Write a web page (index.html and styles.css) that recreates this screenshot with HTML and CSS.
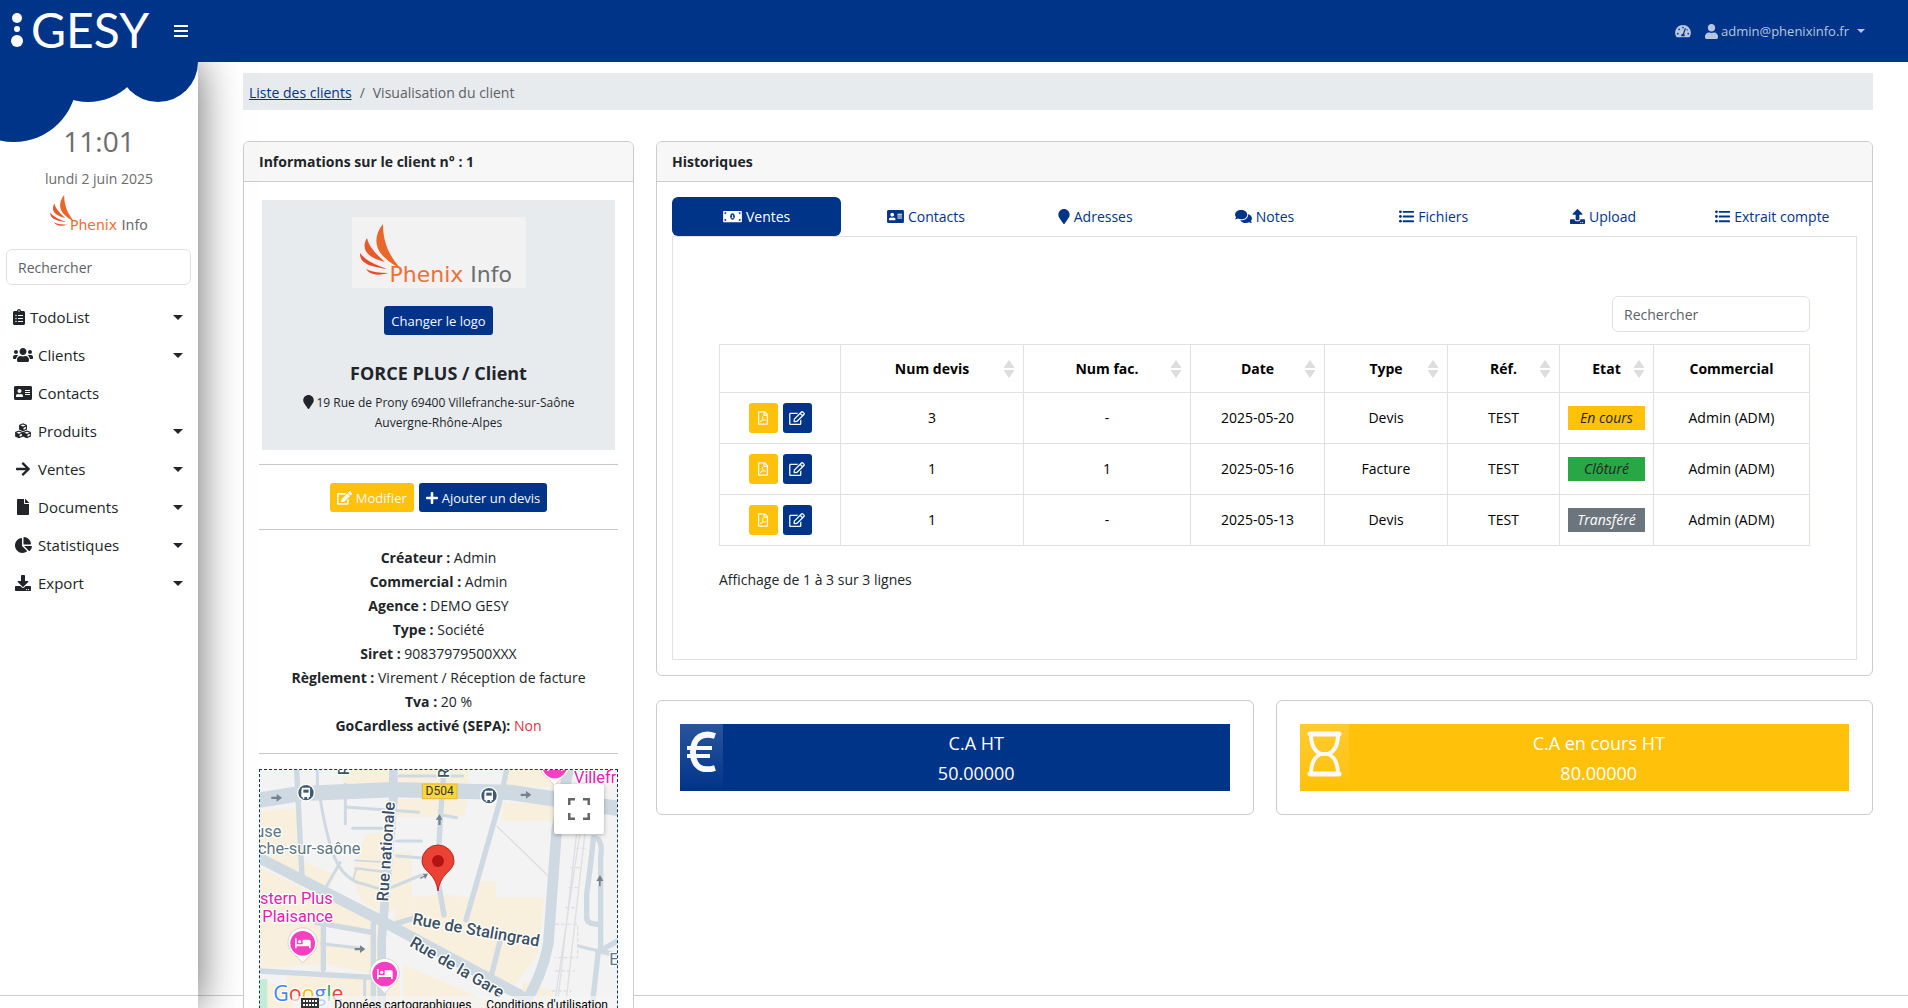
FILE: index.html
```html
<!DOCTYPE html>
<html lang="fr">
<head>
<meta charset="utf-8">
<meta name="viewport" content="width=device-width, initial-scale=1">
<title>GESY - Visualisation du client</title>
<link rel="stylesheet" href="styles.css">
</head>
<body>
<svg class="sprite" aria-hidden="true">
  <symbol id="i-user" viewBox="0 0 448 512"><path d="M224 256c70.7 0 128-57.3 128-128S294.7 0 224 0 96 57.3 96 128s57.3 128 128 128zm89.6 32h-16.7c-22.2 10.2-46.9 16-72.9 16s-50.6-5.8-72.9-16h-16.7C60.2 288 0 348.2 0 422.4V464c0 26.5 21.5 48 48 48h352c26.5 0 48-21.5 48-48v-41.6c0-74.2-60.2-134.4-134.4-134.4z"/></symbol>
  <symbol id="i-gauge" viewBox="0 0 576 512"><path fill-rule="evenodd" d="M288 32C129 32 0 161 0 320c0 53 14 102 39 145 6 9 16 15 27 15h444c11 0 21-6 27-15 25-43 39-92 39-145C576 161 447 32 288 32zm0 64c18 0 32 14 32 32s-14 32-32 32-32-14-32-32 14-32 32-32zM96 384a32 32 0 1 1 0-64 32 32 0 0 1 0 64zm48-160a32 32 0 1 1 0-64 32 32 0 0 1 0 64zm247-43l-62 184c13 12 23 29 23 51 0 12-3 23-9 32H233c-5-9-9-20-9-32 0-35 28-64 63-64l61-183c4-13 17-20 30-15 13 4 17 15 13 27zm25 27c8-23 40-21 46 0 4 17-8 32-24 34-14 0-26-10-25-24zm64 176a32 32 0 1 1 0-64 32 32 0 0 1 0 64z"/></symbol>
  <symbol id="i-tasks" viewBox="0 0 384 512"><path d="M336 64h-80c0-35.3-28.7-64-64-64s-64 28.7-64 64H48C21.5 64 0 85.5 0 112v352c0 26.5 21.5 48 48 48h288c26.5 0 48-21.5 48-48V112c0-26.5-21.5-48-48-48zM96 424c-13.3 0-24-10.7-24-24s10.7-24 24-24 24 10.7 24 24-10.7 24-24 24zm0-96c-13.3 0-24-10.7-24-24s10.7-24 24-24 24 10.7 24 24-10.7 24-24 24zm0-96c-13.3 0-24-10.7-24-24s10.7-24 24-24 24 10.7 24 24-10.7 24-24 24zm96-192c13.3 0 24 10.7 24 24s-10.7 24-24 24-24-10.7-24-24 10.7-24 24-24zm128 368c0 4.4-3.6 8-8 8H168c-4.4 0-8-3.6-8-8v-16c0-4.4 3.6-8 8-8h144c4.4 0 8 3.6 8 8v16zm0-96c0 4.4-3.6 8-8 8H168c-4.4 0-8-3.6-8-8v-16c0-4.4 3.6-8 8-8h144c4.4 0 8 3.6 8 8v16zm0-96c0 4.4-3.6 8-8 8H168c-4.4 0-8-3.6-8-8v-16c0-4.4 3.6-8 8-8h144c4.4 0 8 3.6 8 8v16z"/></symbol>
  <symbol id="i-users" viewBox="0 0 640 512"><path d="M96 224c35.3 0 64-28.7 64-64s-28.7-64-64-64-64 28.7-64 64 28.7 64 64 64zm448 0c35.3 0 64-28.7 64-64s-28.7-64-64-64-64 28.7-64 64 28.7 64 64 64zm32 32h-64c-17.6 0-33.5 7.1-45.1 18.6 40.3 22.1 68.9 62 75.1 109.4h66c17.7 0 32-14.3 32-32v-32c0-35.3-28.7-64-64-64zm-256 0c61.9 0 112-50.1 112-112S381.9 32 320 32 208 82.1 208 144s50.1 112 112 112zm76.8 32h-8.3c-20.8 10-43.9 16-68.5 16s-47.6-6-68.5-16h-8.3C179.6 288 128 339.6 128 403.2V432c0 26.5 21.5 48 48 48h288c26.5 0 48-21.5 48-48v-28.8c0-63.6-51.6-115.2-115.2-115.2zm-223.7-13.4C161.5 263.1 145.6 256 128 256H64c-35.3 0-64 28.7-64 64v32c0 17.7 14.3 32 32 32h65.9c6.3-47.4 34.9-87.3 75.2-109.4z"/></symbol>
  <symbol id="i-card" viewBox="0 0 576 512"><path d="M528 32H48C21.500 32 0 53.500 0 80v352c0 26.500 21.500 48 48 48h480c26.500 0 48-21.500 48-48V80c0-26.500-21.500-48-48-48zm-352 96c35.300 0 64 28.700 64 64s-28.700 64-64 64-64-28.700-64-64 28.700-64 64-64zm112 236.800c0 10.600-10 19.200-22.400 19.200H86.400C74 384 64 375.400 64 364.800v-19.200c0-31.800 30.100-57.600 67.200-57.600h5c12.300 5.100 25.700 8 39.800 8s27.600-2.900 39.800-8h5c37.100 0 67.200 25.800 67.200 57.600v19.200zM512 312c0 4.400-3.600 8-8 8H360c-4.400 0-8-3.600-8-8v-16c0-4.400 3.600-8 8-8h144c4.400 0 8 3.600 8 8v16zm0-64c0 4.400-3.600 8-8 8H360c-4.400 0-8-3.600-8-8v-16c0-4.400 3.600-8 8-8h144c4.400 0 8 3.600 8 8v16zm0-64c0 4.400-3.600 8-8 8H360c-4.400 0-8-3.600-8-8v-16c0-4.400 3.600-8 8-8h144c4.400 0 8 3.600 8 8v16z"/></symbol>
  <symbol id="i-cubes" viewBox="0 0 512 512">
    <g id="cube"><path d="M256 10l112 42q14 6 14 22v120q0 14-13 21l-113 48-113-48q-13-7-13-21V74q0-16 14-22z"/><path d="M256 48l84 32-84 33-84-33zM274 148l72-29v62l-72 32z" fill="#fff"/></g>
    <use href="#cube" x="-126" y="228"/><use href="#cube" x="126" y="228"/>
  </symbol>
  <symbol id="i-arrow" viewBox="0 0 448 512"><path d="M190.500 66.900l22.200-22.200c9.400-9.400 24.600-9.400 33.900 0L441 239c9.400 9.400 9.400 24.600 0 33.900L246.600 467.300c-9.400 9.400-24.600 9.400-33.900 0l-22.200-22.200c-9.500-9.500-9.300-25 .4-34.300L311.400 296H24c-13.300 0-24-10.700-24-24v-32c0-13.300 10.700-24 24-24h287.400L190.900 101.200c-9.800-9.300-10-24.800-.4-34.300z"/></symbol>
  <symbol id="i-file" viewBox="0 0 384 512"><path d="M224 136V0H24C10.700 0 0 10.700 0 24v464c0 13.300 10.700 24 24 24h336c13.300 0 24-10.700 24-24V160H248c-13.200 0-24-10.800-24-24zm160-14.100v6.100H256V0h6.100c6.400 0 12.500 2.500 17 7l97.900 98c4.500 4.500 7 10.600 7 16.900z"/></symbol>
  <symbol id="i-pie" viewBox="0 0 544 512"><path d="M527.790 288H290.500l158.030 158.030c6.040 6.040 15.980 6.530 22.190.68 38.700-36.460 65.320-85.610 73.130-140.860 1.340-9.460-6.510-17.850-16.060-17.850zm-15.830-64.800C503.720 103.740 408.260 8.280 288.800.04 279.680-.59 272 7.100 272 16.240V240h223.770c9.140 0 16.820-7.680 16.190-16.800zM224 288V50.710c0-9.550-8.390-17.400-17.840-16.060C86.990 51.490-4.100 155.600.14 280.370 4.500 408.510 114.830 513.590 243.030 511.980c50.400-.63 96.970-16.870 135.260-44.030 7.900-5.600 8.420-17.230 1.570-24.080L224 288z"/></symbol>
  <symbol id="i-download" viewBox="0 0 512 512"><path d="M216 0h80c13.300 0 24 10.700 24 24v168h87.700c17.800 0 26.700 21.500 14.100 34.100L269.700 378.300c-7.500 7.500-19.800 7.500-27.300 0L90.100 226.100c-12.600-12.600-3.700-34.100 14.100-34.100H192V24c0-13.300 10.700-24 24-24zm296 376v112c0 13.300-10.700 24-24 24H24c-13.300 0-24-10.700-24-24V376c0-13.300 10.700-24 24-24h146.700l49 49c20.100 20.100 52.500 20.100 72.600 0l49-49H488c13.300 0 24 10.700 24 24zm-124 88c0-11-9-20-20-20s-20 9-20 20 9 20 20 20 20-9 20-20zm64 0c0-11-9-20-20-20s-20 9-20 20 9 20 20 20 20-9 20-20z"/></symbol>
  <symbol id="i-upload" viewBox="0 0 512 512"><path d="M296 384h-80c-13.300 0-24-10.700-24-24V192h-87.700c-17.800 0-26.700-21.500-14.100-34.100L242.300 5.700c7.500-7.500 19.800-7.500 27.300 0l152.200 152.200c12.600 12.600 3.700 34.100-14.100 34.100H320v168c0 13.300-10.700 24-24 24zm216-8v112c0 13.300-10.700 24-24 24H24c-13.300 0-24-10.700-24-24V376c0-13.300 10.700-24 24-24h136v8c0 30.900 25.100 56 56 56h80c30.900 0 56-25.100 56-56v-8h136c13.300 0 24 10.700 24 24zm-124 88c0-11-9-20-20-20s-20 9-20 20 9 20 20 20 20-9 20-20zm64 0c0-11-9-20-20-20s-20 9-20 20 9 20 20 20 20-9 20-20z"/></symbol>
  <symbol id="i-marker" viewBox="0 0 384 512"><path d="M172.268 501.670C26.970 291.031 0 269.413 0 192 0 85.961 85.961 0 192 0s192 85.961 192 192c0 77.413-26.970 99.031-172.268 309.670-9.535 13.774-29.930 13.773-39.464 0z"/></symbol>
  <symbol id="i-edit" viewBox="0 0 576 512"><path d="M402.600 83.200l90.200 90.200c3.800 3.800 3.800 10 0 13.800L274.400 405.600l-92.800 10.300c-12.400 1.400-22.900-9.100-21.500-21.500l10.300-92.800L388.800 83.200c3.800-3.800 10-3.800 13.800 0zm162-22.900l-48.800-48.800c-15.200-15.200-39.900-15.200-55.200 0l-35.400 35.400c-3.800 3.800-3.800 10 0 13.800l90.200 90.200c3.800 3.800 10 3.800 13.800 0l35.400-35.400c15.200-15.300 15.200-40 0-55.200zM384 346.200V448H64V128h229.800c3.200 0 6.200-1.300 8.500-3.500l40-40c7.600-7.600 2.200-20.500-8.500-20.500H48C21.500 64 0 85.500 0 112v352c0 26.500 21.500 48 48 48h352c26.500 0 48-21.500 48-48V306.200c0-10.700-12.900-16-20.500-8.500l-40 40c-2.200 2.300-3.500 5.300-3.500 8.500z"/></symbol>
  <symbol id="i-edit-line" viewBox="0 0 576 512"><path d="M402.300 344.900l32-32c5-5 13.700-1.500 13.700 5.700V464c0 26.500-21.500 48-48 48H48c-26.500 0-48-21.500-48-48V112c0-26.500 21.500-48 48-48h273.500c7.100 0 10.700 8.600 5.700 13.700l-32 32c-1.500 1.500-3.500 2.300-5.700 2.300H48v352h352V350.500c0-2.100.8-4.100 2.300-5.600zm156.600-201.800L296.300 405.700l-90.400 10c-26.200 2.900-48.500-19.200-45.600-45.600l10-90.400L432.900 17.100c22.900-22.900 59.900-22.900 82.700 0l43.200 43.200c22.900 22.900 22.900 60 .1 82.800zM460.100 174L402 115.900 216.200 301.800l-7.300 65.300 65.300-7.300L460.100 174zm64.800-79.700l-43.200-43.200c-4.100-4.100-10.800-4.100-14.800 0L436 82l58.100 58.100 30.900-30.900c4-4.200 4-10.800-.1-14.900z"/></symbol>
  <symbol id="i-pdf" viewBox="0 0 384 512"><path d="M369.900 97.900L286 14C277 5 264.800-.1 252.100-.1H48C21.500 0 0 21.500 0 48v416c0 26.500 21.500 48 48 48h288c26.500 0 48-21.500 48-48V131.900c0-12.700-5.100-25-14.100-34zM332.100 128H256V51.900l76.100 76.100zM48 464V48h160v104c0 13.300 10.700 24 24 24h104v288H48zm250.200-143.700c-12.200-12-47-8.700-64.400-6.500-17.200-10.500-28.700-25-36.800-46.300 3.900-16.100 10.100-40.600 5.400-56-4.200-26.200-37.800-23.600-42.600-5.900-4.400 16.100-.4 38.500 7 67.100-10 23.900-24.900 56-35.400 74.400-20 10.300-47 26.200-51 46.200-3.300 15.800 26 55.200 76.100-31.200 22.400-7.400 46.800-16.500 68.400-20.100 18.900 10.200 41 17 55.800 17 25.500 0 28-28.200 17.500-38.700zm-198.100 77.800c5.100-13.700 24.500-29.500 30.400-35-19 30.300-30.400 35.700-30.400 35zm81.600-190.600c7.400 0 6.700 32.100 1.800 40.800-4.400-13.900-4.300-40.800-1.800-40.800zm-24.400 136.600c9.700-16.900 18-37 24.700-54.700 8.300 15.100 18.900 27.200 30.100 35.500-20.800 4.300-38.900 13.100-54.800 19.200zm131.600-5s-5 6-37.300-7.800c35.100-2.600 40.900 5.400 37.300 7.800z"/></symbol>
  <symbol id="i-plus" viewBox="0 0 448 512"><path d="M416 208H272V64c0-17.670-14.330-32-32-32h-32c-17.670 0-32 14.330-32 32v144H32c-17.670 0-32 14.330-32 32v32c0 17.670 14.330 32 32 32h144v144c0 17.670 14.330 32 32 32h32c17.670 0 32-14.330 32-32V304h144c17.670 0 32-14.330 32-32v-32c0-17.670-14.330-32-32-32z"/></symbol>
  <symbol id="i-comments" viewBox="0 0 576 512"><path d="M416 192c0-88.400-93.100-160-208-160S0 103.600 0 192c0 34.300 14.100 65.900 38 92-13.400 30.200-35.500 54.200-35.800 54.500-2.200 2.300-2.800 5.700-1.500 8.700S4.800 352 8 352c36.600 0 66.900-12.300 88.700-25 32.200 15.700 70.300 25 111.300 25 114.900 0 208-71.600 208-160zm122 220c23.900-26 38-57.700 38-92 0-66.900-53.500-124.200-129.300-148.100.9 6.600 1.300 13.300 1.300 20.100 0 105.900-107.700 192-240 192-10.800 0-21.300-.8-31.700-1.900C207.800 439.600 281.800 480 368 480c41 0 79.100-9.200 111.300-25 21.800 12.700 52.100 25 88.700 25 3.200 0 6.100-1.900 7.300-4.800 1.300-2.900.7-6.300-1.500-8.700-.3-.3-22.400-24.200-35.800-54.500z"/></symbol>
  <symbol id="i-list" viewBox="0 0 512 512"><circle cx="48" cy="96" r="48"/><circle cx="48" cy="256" r="48"/><circle cx="48" cy="416" r="48"/><rect x="128" y="64" width="384" height="64" rx="16"/><rect x="128" y="224" width="384" height="64" rx="16"/><rect x="128" y="384" width="384" height="64" rx="16"/></symbol>
  <symbol id="i-money" viewBox="0 0 640 512"><path fill-rule="evenodd" d="M20 64h600a20 20 0 0 1 20 20v344a20 20 0 0 1-20 20H20a20 20 0 0 1-20-20V84a20 20 0 0 1 20-20zm28 48v64a64 64 0 0 0 64-64zm0 224v64h64a64 64 0 0 0-64-64zm272 32c44 0 80-50 80-112s-36-112-80-112-80 50-80 112 36 112 80 112zm272 32v-64a64 64 0 0 0-64 64zm0-224v-64h-64a64 64 0 0 0 64 64z"/><path d="M300 204l28-12h12v96h20v24h-80v-24h22v-62l-12 4z"/></symbol>
  <symbol id="i-phenix" viewBox="0 0 130 66"><g fill="#e9672a"><path d="M24 5c-9 11-9 24 1 33 6 6 12 9 16 11C31 37 24 25 24 5z"/><path fill="#e95a2a" d="M8 19c-5 8-2 15 5 19 5 3 10 4 13 5C17 35 10 28 8 19z"/><path fill="#e84a2a" d="M1 34c0 9 6 13 27 16C17 46 7 42 1 34z"/><path fill="#e84a2a" d="M7 50c4 6 12 7 22 4-8 0-16-1-22-4z"/></g></symbol>
</svg>

<div class="shell">
  <header class="topbar">
    <a class="brand" href="#" aria-label="GESY">
      <svg class="brand-dots" width="14" height="36" viewBox="0 0 14 36" aria-hidden="true"><circle cx="6" cy="6" r="5"/><circle cx="6" cy="17" r="3"/><circle cx="6" cy="29" r="6"/></svg>
      <span class="brand-name">GESY</span>
    </a>
    <button class="burger" type="button" aria-label="Menu"><span></span><span></span><span></span></button>
    <nav class="account">
      <a href="#" aria-label="Tableau de bord"><svg class="icon" width="16" height="14"><use href="#i-gauge"/></svg></a>
      <a href="#"><svg class="icon" width="13" height="15"><use href="#i-user"/></svg>admin@phenixinfo.fr<span class="caret caret-small"></span></a>
    </nav>
  </header>

  <div class="frame">
    <aside class="sidebar">
      <svg class="cloud" width="198" height="80" viewBox="0 62 198 80" aria-hidden="true"><circle cx="14" cy="79" r="63"/><circle cx="88" cy="43" r="59"/><circle cx="158" cy="62" r="40"/></svg>
      <p class="clock">11:01</p>
      <p class="day">lundi 2 juin 2025</p>
      <div class="side-logo phenix phenix-small"><svg width="80" height="40" aria-hidden="true"><use href="#i-phenix"/></svg><span class="phenix-name"><b>Phenix</b> Info</span></div>
      <form class="side-search"><input class="field" type="search" placeholder="Rechercher" aria-label="Rechercher"></form>
      <nav class="menu">
        <a class="tight" href="#"><span class="menu-icon"><svg width="12" height="16"><use href="#i-tasks"/></svg></span>TodoList<span class="caret"></span></a>
        <a href="#"><span class="menu-icon"><svg width="20" height="16"><use href="#i-users"/></svg></span>Clients<span class="caret"></span></a>
        <a href="#"><span class="menu-icon"><svg width="18" height="16"><use href="#i-card"/></svg></span>Contacts</a>
        <a href="#"><span class="menu-icon"><svg width="16" height="16"><use href="#i-cubes"/></svg></span>Produits<span class="caret"></span></a>
        <a href="#"><span class="menu-icon"><svg width="14" height="16"><use href="#i-arrow"/></svg></span>Ventes<span class="caret"></span></a>
        <a href="#"><span class="menu-icon"><svg width="12" height="16"><use href="#i-file"/></svg></span>Documents<span class="caret"></span></a>
        <a href="#"><span class="menu-icon"><svg width="17" height="16"><use href="#i-pie"/></svg></span>Statistiques<span class="caret"></span></a>
        <a href="#"><span class="menu-icon"><svg width="16" height="16"><use href="#i-download"/></svg></span>Export<span class="caret"></span></a>
      </nav>
      <div class="footer side-foot"></div>
    </aside>

    <div class="page">
      <main class="content">
        <nav class="crumbs" aria-label="Fil d'Ariane"><a href="#">Liste des clients</a><span>/</span><span>Visualisation du client</span></nav>

        <div class="columns">
          <section class="card client">
            <h2 class="card-title">Informations sur le client n° : 1</h2>
            <div class="card-body">
              <div class="identity">
                <div class="phenix phenix-large"><svg width="130" height="66" aria-hidden="true"><use href="#i-phenix"/></svg><span class="phenix-name"><b>Phenix</b> Info</span></div>
                <button class="btn btn-blue" type="button">Changer le logo</button>
                <h3>FORCE PLUS / Client</h3>
                <p><svg class="icon" width="11" height="14"><use href="#i-marker"/></svg>19 Rue de Prony 69400 Villefranche-sur-Saône<br>Auvergne-Rhône-Alpes</p>
              </div>
              <div class="actions">
                <button class="btn btn-yellow" type="button"><svg class="icon" width="15" height="14"><use href="#i-edit"/></svg>Modifier</button>
                <button class="btn btn-blue" type="button"><svg class="icon" width="12" height="14"><use href="#i-plus"/></svg>Ajouter un devis</button>
              </div>
              <ul class="facts">
                <li><b>Créateur :</b> Admin</li>
                <li><b>Commercial :</b> Admin</li>
                <li><b>Agence :</b> DEMO GESY</li>
                <li><b>Type :</b> Société</li>
                <li><b>Siret :</b> 90837979500XXX</li>
                <li><b>Règlement :</b> Virement / Réception de facture</li>
                <li><b>Tva :</b> 20 %</li>
                <li><b>GoCardless activé (SEPA):</b> <span class="no">Non</span></li>
              </ul>
              <div class="map">
                <svg class="map-art" viewBox="60 57 1071 900" preserveAspectRatio="xMinYMin slice" role="img" aria-label="Plan du quartier">
                  <rect x="0" y="0" width="1200" height="960" fill="#f3f3f4"/>
                  <g fill="#f8efdd">
                    <path d="M310 57h140v40l-140 20zM475 57h210v45H475zM470 145h210l-8 52H470zM790 57h180v50H790zM790 155h150v55H786zM60 180l110-8 8 205-118-60zM375 250l60-5v60l80-3v140l-80 50-70-40-30-80zM190 330l90 40-20 40-70-35zM60 350l360 170v150L250 640 60 650zM480 440l130-10 90 10 20-50h48v50h145l-20 170-90 120-350-200zM140 675l340 10v270H60V700h80zM490 640l300 130v190H490zM850 690l90 30-50 240h-90z"/>
                  </g>
                  <path d="M0 685h82v270H0z" fill="#c3ecd4"/>
                  <path d="M258 528l100 16 28 14v34l-128-10z" fill="#f3f3f4"/>
                  <g fill="none" stroke="#ced9e2" stroke-linecap="round" stroke-linejoin="round">
                    <path stroke-width="9" d="M232 57v80M240 140q20 120 44 180 30 70 90 80l60 18 110-46M316 100v118M316 168l220 16M338 232h126M470 270h74M470 315l80 6M478 75h190M605 192l45 8M300 335l-40 70M245 578l120 14M374 685v100M1015 585l60 15"/>
                    <path stroke-width="5" d="M345 328l100 6M340 385l10-34 100 12M345 352l90 12"/>
                    <path stroke-width="16" d="M170 57l16 320M612 57l-10 130-10 190 20 115M800 57l-22 100-100 350M460 520l60-18M400 520v280M250 515v140M230 515l170 30M60 660l350 20M780 570l-30 120M1060 260q-5 60-20 170v70q0 20 40 20M1060 260q30 0 22 60v270M1080 600l60-35M1080 600l60 15M1075 600l-20 180"/>
                    <path stroke-width="26" d="M460 57v90l-35 420v220"/>
                    <path stroke-width="32" d="M60 322l370 190 410 220M985 57l-35 180-25 340q-20 110-90 210"/>
                    <path stroke-width="46" d="M40 150l140-22 280-12 350 8 350 52"/>
                  </g>
                  <g fill="none" stroke="#dedfe2" stroke-width="4"><path d="M770 225l155 150M1020 245L940 780M1035 245l-60 535M1010 245L950 780"/><path stroke-dasharray="12 6" d="M1005 292h32M990 350h36M985 410h34M975 470h34M945 520h68v100h-70M945 660h60M935 720h60"/></g>
                  <g fill="#74838f"><path id="way" d="M94 137h16v-8l16 11-16 12v-8H94z"/><use href="#way" x="748" y="-9"/><use href="#way" x="250" y="454"/><path d="M595 222v-16h-8l12-16 8 16h-5v16zM1077 406v-16h-8l11-18 10 18h-8v16zM540 380l12-6-4-6 16 0-8 16-4-6-10 6z"/></g>
                  <g class="map-road"><text transform="translate(444 452) rotate(-86)">Rue nationale</text><text transform="translate(516 520) rotate(10)">Rue de Stalingrad</text><text transform="translate(506 584) rotate(30)">Rue de la Gare</text></g>
                  <g class="map-road map-thin"><text transform="translate(327 72) rotate(-90)">R</text><text transform="translate(628 80) rotate(-90)">R</text></g>
                  <g class="map-place"><text x="46" y="257">use</text><text x="54" y="310">che-sur-saône</text><text x="1108" y="642">E</text></g>
                  <g class="map-hotel"><text x="60" y="460">stern Plus</text><text x="67" y="513">Plaisance</text><text x="1002" y="95">Villefr</text></g>
                  <rect x="547" y="99" width="104" height="44" fill="#fdd835" stroke="#e2b93b" stroke-width="3"/><text class="map-shield" x="599" y="133">D504</text>
                  <g id="bus"><circle cx="198" cy="125" r="27" fill="#fff"/><circle cx="198" cy="125" r="23" fill="#3f5b73"/><path d="M186 110h24v28h-4v5h-5v-5h-8v5h-5v-5h-4v-20z" fill="#fff"/><path d="M190 116h16v9h-16z" fill="#3f5b73"/></g><use href="#bus" x="549" y="9"/>
                  <g id="hotel"><path d="M188 636q-8-12-26-26a44 44 0 1 1 52 0q-18 14-26 26z" fill="#fff" stroke="#c4c4c4" stroke-width="2"/><circle cx="188" cy="577" r="37" fill="#f73fc0"/><path d="M165 562h5v18h18v-14h20q4 0 4 6v20h-5v-6h-37v6h-5z" fill="#fff"/><circle cx="179" cy="572" r="5" fill="#fff"/></g><use href="#hotel" x="246" y="92"/><use href="#hotel" x="756" y="-532"/>
                  <path d="M594 420q-4-32-26-54-22-18-22-36a48 48 0 0 1 96 0q0 18-22 36-22 22-26 54z" fill="#ea4335" stroke="#c5221f" stroke-width="3"/><circle cx="594" cy="330" r="18" fill="#b31412"/>
                  <text class="map-google" x="100" y="750"><tspan fill="#4285f4">G</tspan><tspan fill="#ea4335">o</tspan><tspan fill="#fbbc04">o</tspan><tspan fill="#4285f4">g</tspan><tspan fill="#34a853">l</tspan><tspan fill="#ea4335">e</tspan></text>
                </svg>
                <button class="map-full" type="button" aria-label="Plein écran"><svg width="22" height="22" viewBox="0 0 22 22"><path d="M1 7V1h6M15 1h6v6M21 15v6h-6M7 21H1v-6" fill="none" stroke="#666" stroke-width="3"/></svg></button>
                <div class="map-legal"><svg width="18" height="14" viewBox="0 0 18 14" aria-hidden="true"><path fill="#333" d="M0 0h18v14H0z"/><path stroke="#fff" stroke-width="2" stroke-dasharray="2 1" d="M2 3h14M2 7h14"/></svg><a href="#">Données cartographiques</a><a href="#">Conditions d'utilisation</a></div>
              </div>
            </div>
          </section>

          <div class="history">
            <section class="card">
              <h2 class="card-title">Historiques</h2>
              <div class="card-body">
                <nav class="tabs">
                  <a class="active" href="#"><svg class="icon" width="19" height="15"><use href="#i-money"/></svg>Ventes</a>
                  <a href="#"><svg class="icon" width="17" height="15"><use href="#i-card"/></svg>Contacts</a>
                  <a href="#"><svg class="icon" width="12" height="15"><use href="#i-marker"/></svg>Adresses</a>
                  <a href="#"><svg class="icon" width="17" height="15"><use href="#i-comments"/></svg>Notes</a>
                  <a href="#"><svg class="icon" width="15" height="15"><use href="#i-list"/></svg>Fichiers</a>
                  <a href="#"><svg class="icon" width="15" height="15"><use href="#i-upload"/></svg>Upload</a>
                  <a href="#"><svg class="icon" width="15" height="15"><use href="#i-list"/></svg>Extrait compte</a>
                </nav>
                <div class="panel">
                  <input class="field table-search" type="search" placeholder="Rechercher" aria-label="Rechercher dans le tableau">
                  <table class="sales">
                    <colgroup><col class="c-act"><col class="c-devis"><col class="c-fac"><col class="c-date"><col class="c-type"><col class="c-ref"><col class="c-etat"><col class="c-com"></colgroup>
                    <thead><tr><th></th><th class="sort">Num devis</th><th class="sort">Num fac.</th><th class="sort">Date</th><th class="sort">Type</th><th class="sort">Réf.</th><th class="sort">Etat</th><th>Commercial</th></tr></thead>
                    <tbody>
                      <tr><td><div class="row-actions"><button class="btn btn-yellow btn-icon" type="button" aria-label="PDF"><svg width="10" height="14"><use href="#i-pdf"/></svg></button><button class="btn btn-blue btn-icon" type="button" aria-label="Modifier"><svg width="16" height="14"><use href="#i-edit-line"/></svg></button></div></td><td>3</td><td>-</td><td>2025-05-20</td><td>Devis</td><td>TEST</td><td class="state"><em class="tag tag-open">En cours</em></td><td>Admin (ADM)</td></tr>
                      <tr><td><div class="row-actions"><button class="btn btn-yellow btn-icon" type="button" aria-label="PDF"><svg width="10" height="14"><use href="#i-pdf"/></svg></button><button class="btn btn-blue btn-icon" type="button" aria-label="Modifier"><svg width="16" height="14"><use href="#i-edit-line"/></svg></button></div></td><td>1</td><td>1</td><td>2025-05-16</td><td>Facture</td><td>TEST</td><td class="state"><em class="tag tag-closed">Clôturé</em></td><td>Admin (ADM)</td></tr>
                      <tr><td><div class="row-actions"><button class="btn btn-yellow btn-icon" type="button" aria-label="PDF"><svg width="10" height="14"><use href="#i-pdf"/></svg></button><button class="btn btn-blue btn-icon" type="button" aria-label="Modifier"><svg width="16" height="14"><use href="#i-edit-line"/></svg></button></div></td><td>1</td><td>-</td><td>2025-05-13</td><td>Devis</td><td>TEST</td><td class="state"><em class="tag tag-moved">Transféré</em></td><td>Admin (ADM)</td></tr>
                    </tbody>
                  </table>
                  <p class="count">Affichage de 1 à 3 sur 3 lignes</p>
                </div>
              </div>
            </section>

            <div class="totals">
              <section class="card total">
                <div class="total-bar blue">
                  <span class="total-icon"><svg class="outline" width="29" height="41" viewBox="0 0 29 41" aria-hidden="true"><path stroke-width="6" d="M28 5C16 1 6 6 6 21s9 20 22 16"/><path stroke-width="4" d="M0 17h25M0 25h23"/></svg></span>
                  <p>C.A HT<br>50.00000</p>
                </div>
              </section>
              <section class="card total">
                <div class="total-bar yellow">
                  <span class="total-icon"><svg class="outline" width="35" height="46" viewBox="0 0 35 46" aria-hidden="true"><path stroke-width="5" stroke-linecap="round" d="M3 3h29M3 43h29"/><path stroke-width="4" d="M4 4c0 12 5 17 10 19-5 2-10 8-10 20M31 4c0 12-5 17-10 19 5 2 10 8 10 20M13 23h9"/></svg></span>
                  <p>C.A en cours HT<br>80.00000</p>
                </div>
              </section>
            </div>
          </div>
        </div>
      </main>
      <footer class="footer"></footer>
    </div>
  </div>
</div>
</body>
</html>
```
FILE: styles.css
```css
:root {
  --blue: #003489;
  --yellow: #ffc10a;
  --ink: #212529;
  --grey: #e8ebee;
  --line: #ccc;
  --soft-line: #dee2e6;
}

* { box-sizing: border-box; }

body {
  margin: 0;
  background: #fff;
  color: var(--ink);
  font: 14px/24px "Open Sans", "Noto Sans", sans-serif;
}

h2, h3, p, ul { margin: 0; padding: 0; }
a { color: inherit; text-decoration: none; }
button { font: inherit; border: 0; padding: 0; cursor: pointer; }
svg { fill: currentColor; }
.outline { fill: none; stroke: #f8f9fa; }
.sprite { position: absolute; width: 0; height: 0; }
.icon { flex: none; }

/* Shell */
.shell { display: flex; flex-direction: column; height: 100vh; overflow: hidden; }
.frame { display: flex; flex: 1; min-height: 0; }

/* Top bar */
.topbar {
  position: relative;
  z-index: 2;
  display: flex;
  align-items: center;
  flex: none;
  height: 62px;
  padding: 0 43px 0 11px;
  background: var(--blue);
  color: #fff;
}
.brand { display: flex; align-items: center; gap: 6px; width: 163px; height: 62px; padding-bottom: 2px; }
.brand-name { font: 48px/58px Lato, sans-serif; }
.burger { display: flex; flex-direction: column; gap: 3px; width: 14px; background: none; }
.burger span { width: 14px; height: 2px; background: #fff; }
.account { display: flex; gap: 14px; margin-left: auto; color: #b8c6df; font-size: 13px; }
.account a { display: flex; align-items: center; gap: 3px; }

.caret { margin-left: auto; border: 5px solid transparent; border-top-color: currentColor; border-bottom: 0; }
.caret-small { margin-left: 5px; border-width: 4px; border-bottom: 0; }

/* Sidebar */
.sidebar {
  position: relative;
  z-index: 1;
  display: flex;
  flex-direction: column;
  flex: none;
  width: 198px;
  background: #fff;
  box-shadow: 0 0 40px rgba(0, 0, 0, .6);
}
.cloud { flex: none; color: var(--blue); margin-bottom: -20px; }
.clock { position: relative; color: #6c6c6c; font-size: 28px; line-height: 38px; text-align: center; }
.day { margin-top: 7px; color: #6c6c6c; text-align: center; }
.side-logo { margin: 0 auto; }
.side-search { padding: 17px 7px 13px 6px; }
.side-foot { margin-top: auto; }
.field {
  display: block;
  width: 100%;
  height: 36px;
  padding: 0 11px;
  border: 1px solid var(--soft-line);
  border-radius: 6px;
  background: #fff;
  color: var(--ink);
  font: inherit;
}
.field::placeholder { color: #5c6166; opacity: 1; }
.menu a { display: flex; align-items: center; gap: 5px; height: 38px; padding: 0 15px 0 13px; font-size: 15px; }
.menu-icon { display: flex; justify-content: center; width: 20px; }
.menu .tight .menu-icon { width: 12px; }

/* Phenix logo */
.phenix { display: flex; align-items: flex-end; color: #6d6e70; font-family: "DejaVu Sans", sans-serif; }
.phenix svg { flex: none; }
.phenix b { color: #ee7034; font-weight: 400; }
.phenix-name { white-space: nowrap; }
.phenix-large { width: 174px; height: 71px; padding: 0 0 3px 7px; background: #f2f2f3; font-size: 22px; line-height: 20px; }
.phenix-large svg { margin-right: -99px; }
.phenix-small { width: 100px; height: 41px; font-size: 14px; line-height: 14px; }
.phenix-small svg { margin-right: -59px; }

/* Page */
.page { display: flex; flex: 1; flex-direction: column; min-width: 0; }
.content { flex: 1; min-height: 0; padding: 11px 35px 0 45px; }
.footer { flex: none; height: 13px; border-top: 1px solid var(--line); }
.crumbs { display: flex; gap: 8px; height: 37px; padding: 8px 6px; background: var(--grey); color: #5c6166; line-height: 24px; }
.crumbs a { color: var(--blue); text-decoration: underline; }

.columns { display: grid; grid-template-columns: repeat(4, minmax(0, 1fr)); gap: 22px; align-items: start; margin-top: 31px; }
.history { grid-column: span 3; }
.card { position: relative; border: 1px solid var(--line); border-radius: 6px; background: #fff; }
.card-title { height: 40px; padding: 8px 15px; border-bottom: 1px solid var(--line); border-radius: 5px 5px 0 0; background: #f7f7f7; font-size: 14px; line-height: 24px; font-weight: 700; }
.card-body { padding: 15px; }

/* Buttons */
.btn { display: inline-flex; align-items: center; justify-content: center; gap: 4px; height: 29px; padding: 0 7px; border-radius: 3px; color: #f8f9fa; font-size: 13px; white-space: nowrap; }
.btn-blue { background: var(--blue); }
.btn-yellow { background: var(--yellow); }
.btn-icon { width: 29px; height: 30px; padding: 0; }

/* Client card */
.identity { display: flex; flex-direction: column; align-items: center; margin: 3px 3px 14px; padding: 17px 8px; background: var(--grey); text-align: center; }
.identity .btn { margin-top: 18px; }
.identity h3 { margin: 26px 0 8px; font-size: 18px; line-height: 24px; font-weight: 700; }
.identity p { font-size: 12px; line-height: 20px; }
.identity p .icon { margin-right: 3px; vertical-align: -2px; }
.actions { display: flex; justify-content: center; gap: 5px; padding: 18px 0 17px; border: 1px solid #c8c8c8; border-width: 1px 0; }
.facts { padding: 16px 0 15px; border-bottom: 1px solid #c8c8c8; list-style: none; text-align: center; }
.no { color: #dc3545; }

/* Map */
.map { position: relative; height: 300px; margin-top: 15px; border: 1px dashed var(--blue); overflow: hidden; font-family: Roboto, sans-serif; }
.map-art { display: block; width: 100%; height: auto; }
.map-art text { paint-order: stroke; stroke: #fff; stroke-width: 8px; stroke-linejoin: round; font-size: 49px; }
.map-road { fill: #3c4f63; font-weight: 500; }
.map-art .map-thin text { font-size: 42px; }
.map-place { fill: #5d7685; }
.map-hotel { fill: #e620ae; }
.map-art .map-shield { fill: #333; stroke: none; font-size: 36px; text-anchor: middle; }
.map-art .map-google { font: 64px "Open Sans", sans-serif; }
.map-full { position: absolute; top: 14px; right: 13px; display: flex; align-items: center; justify-content: center; width: 50px; height: 50px; border-radius: 2px; background: #fff; box-shadow: 0 1px 4px rgba(0, 0, 0, .3); }
.map-legal { position: absolute; top: 226px; right: 0; display: flex; gap: 15px; align-items: center; padding: 0 9px; background: rgba(245, 245, 245, .7); color: #000; font-size: 12px; line-height: 18px; white-space: nowrap; }

/* Tabs and table */
.tabs { display: grid; grid-template-columns: repeat(7, 1fr); color: var(--blue); }
.tabs a { display: flex; align-items: center; justify-content: center; gap: 4px; height: 39px; border-radius: 6px; }
.tabs .active { background: var(--blue); color: #fff; }
.panel { padding: 59px 46px 67px; border: 1px solid var(--soft-line); }
.table-search { width: 198px; margin: 0 0 12px auto; }
.sales { width: 100%; table-layout: fixed; border-collapse: collapse; color: #000; text-align: center; }
.sales th, .sales td { height: 51px; padding: 0; border: 1px solid var(--soft-line); }
.sales th { height: 48px; font-weight: 700; }
.sort { background: url("data:image/svg+xml,%3Csvg xmlns='http://www.w3.org/2000/svg' width='10' height='20'%3E%3Cpath fill='%23ddd' d='M5 1l5 7v1H0V8zM0 11h10v1l-5 7-5-7z'/%3E%3C/svg%3E") no-repeat right 9px center; }
.c-act { width: 121px; }
.c-devis { width: 183px; }
.c-fac { width: 167px; }
.c-date { width: 134px; }
.c-type { width: 123px; }
.c-ref { width: 112px; }
.c-etat { width: 94px; }
.c-com { width: 156px; }
.row-actions { display: flex; justify-content: center; gap: 5px; }
.sales .state { padding: 0 8px; }
.tag { display: block; height: 24px; color: var(--ink); }
.tag-open { background: var(--yellow); }
.tag-closed { background: #28a745; }
.tag-moved { background: #6c757d; color: #fff; }
.count { margin-top: 22px; }

/* Totals */
.totals { display: grid; grid-template-columns: repeat(2, minmax(0, 1fr)); gap: 22px; margin-top: 24px; }
.total { padding: 23px; }
.total-bar { display: flex; height: 67px; color: #fff; font-size: 18px; line-height: 30px; }
.total-bar p { flex: 1; padding-top: 4px; text-align: center; }
.total-icon { padding: 7px; background: linear-gradient(rgba(255, 255, 255, .16), rgba(255, 255, 255, 0)); }
.blue { background: var(--blue); }
.yellow { background: var(--yellow); }
```
